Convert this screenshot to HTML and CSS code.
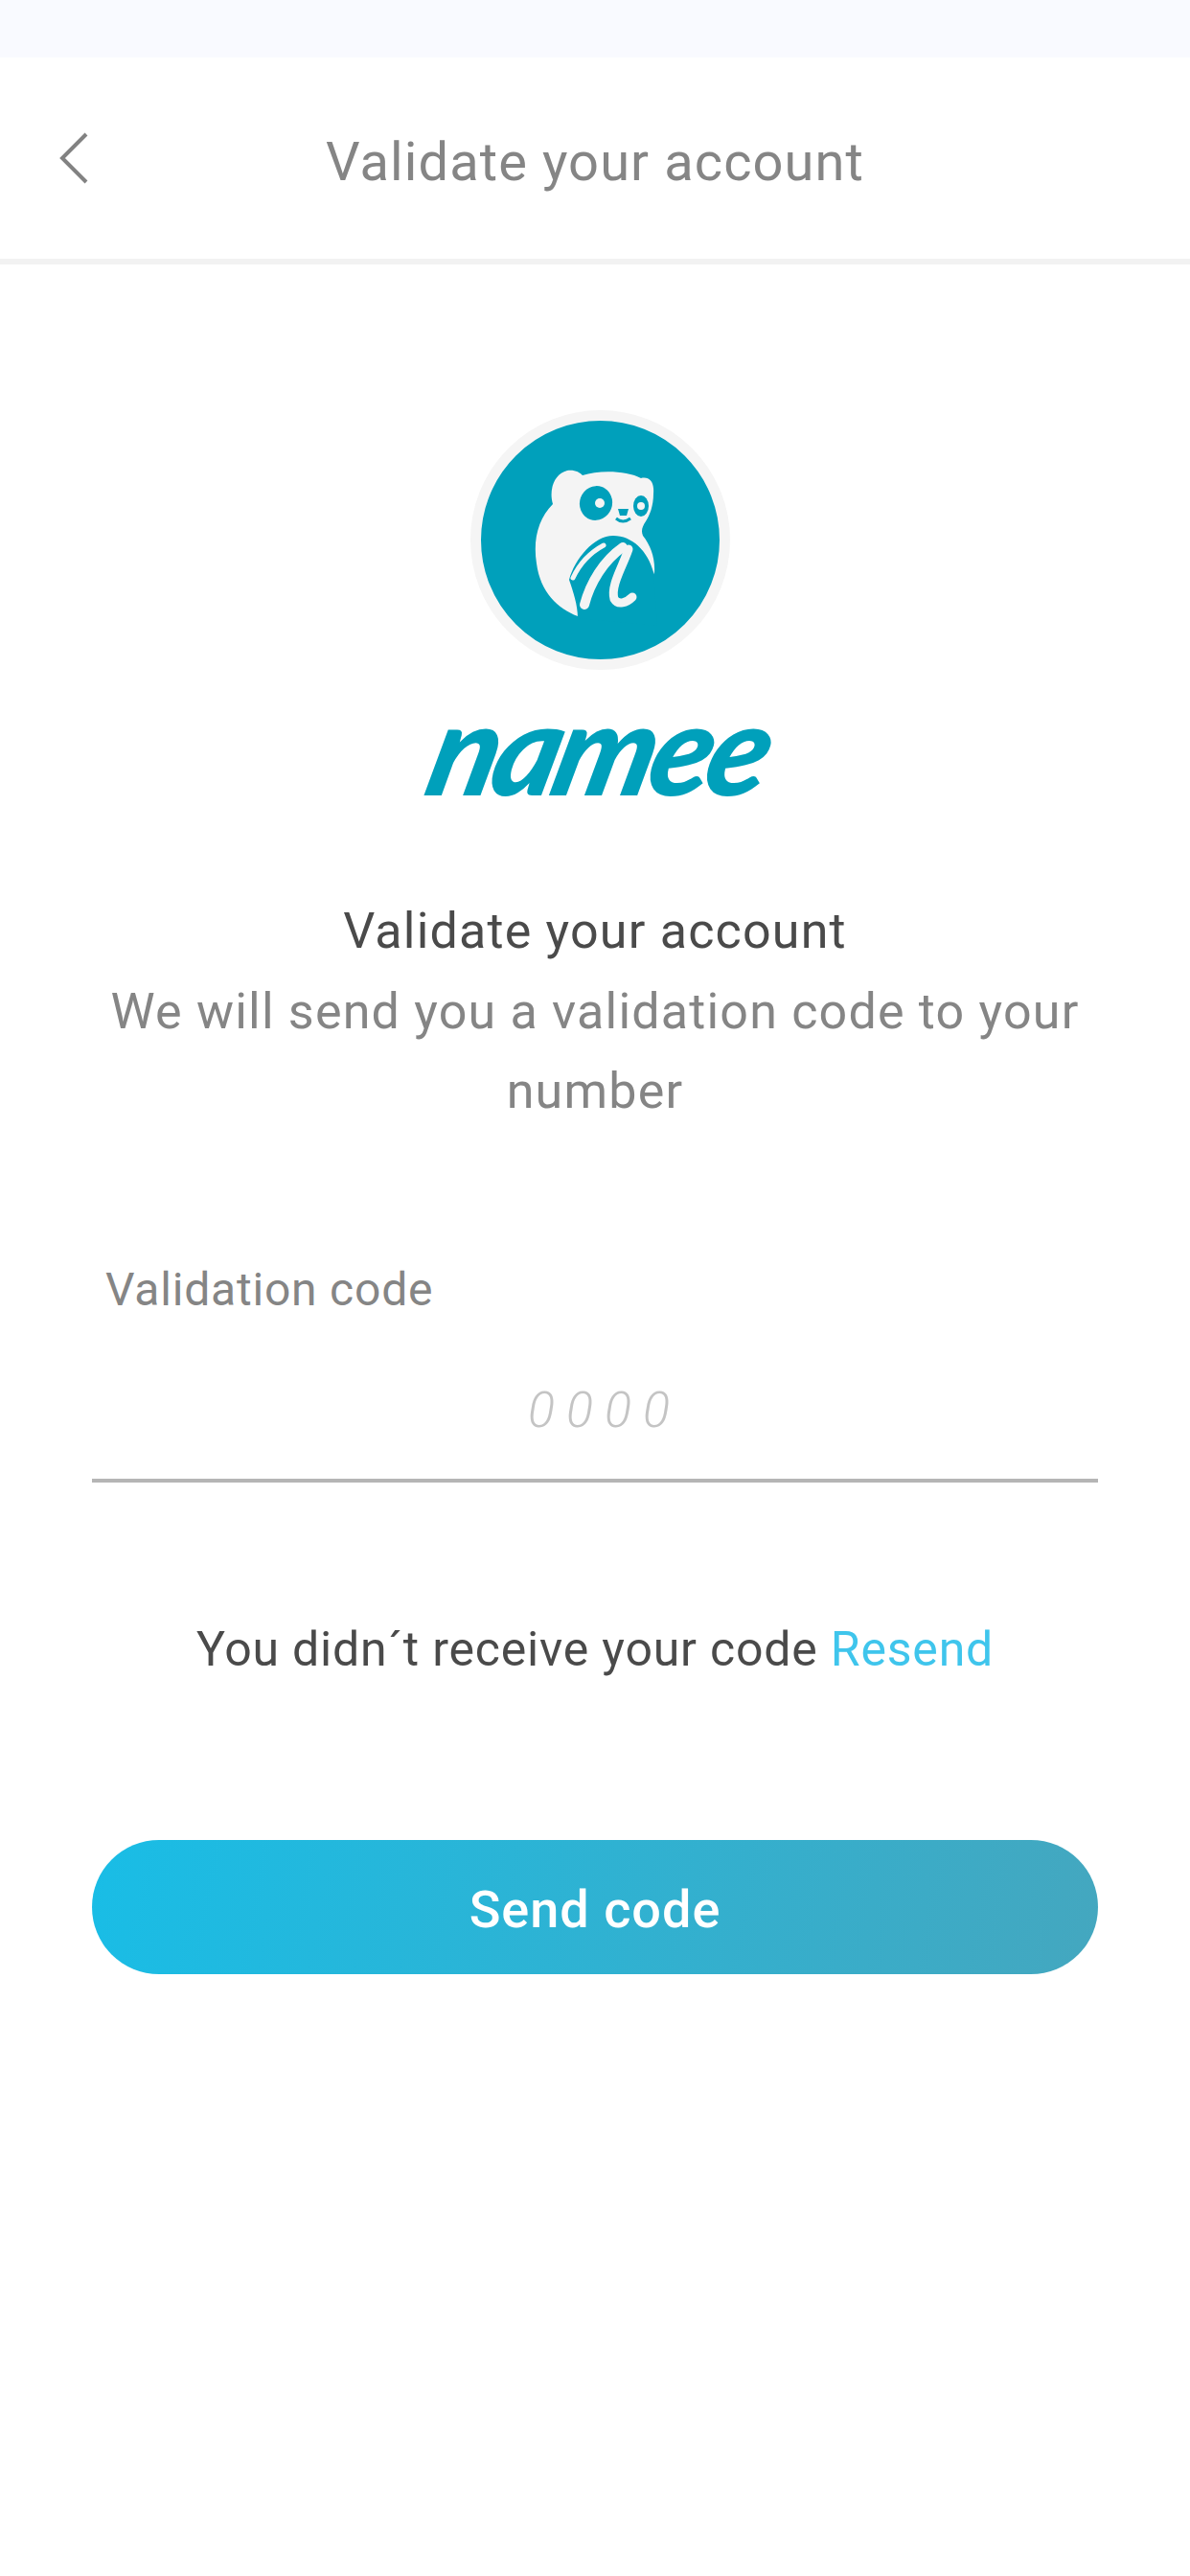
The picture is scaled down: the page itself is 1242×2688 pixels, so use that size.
FILE: index.html
```html
<!DOCTYPE html>
<html lang="en">
<head>
  <meta charset="UTF-8">
  <title>Validate your account</title>
  <link rel="stylesheet" href="styles.css">
</head>
<body>

  <div class="status-bar"></div>

  <header class="top-bar">
    <svg class="back-icon" viewBox="0 0 30 54" aria-hidden="true">
      <path d="M28 2 L3 27 L28 52" fill="none" stroke="#828282" stroke-width="4"/>
    </svg>
    <h1 class="top-title">Validate your account</h1>
  </header>

  <main class="content">
    <div class="logo-ring">
      <svg class="logo-mark" viewBox="0 0 300 300" aria-hidden="true">
        <!-- head and body -->
        <path fill="#f4f4f4" d="M107 113 C103 100 107 82 122 78 C130 77 135 80 138 83 C155 77 185 78 199 86 C208 84 213 90 212 102 C212 115 208 125 204 131 C200 137 199 141 201 146 C209 156 214 170 213 184 L200 215 L133 230 C112 222 94 205 90 175 C86 150 92 128 107 113 Z"/>
        <!-- space under the arch -->
        <path fill="#00a0bb" d="M124 192 C130 170 150 146 170 146 C190 146 206 162 212 184 L216 240 L133 232 C133 218 128 204 124 192 Z"/>
        <!-- m -->
        <g fill="none" stroke="#f4f4f4" stroke-linecap="round">
          <path stroke-width="5" d="M128 190 C135 175 147 163 160 156"/>
          <path stroke-width="10" d="M140 218 C146 195 160 172 180 158"/>
          <path stroke-width="9" d="M186 160 C180 178 167 198 171 212 C175 219 184 216 190 210"/>
        </g>
        <!-- face -->
        <ellipse fill="#00a0bb" cx="152" cy="112" rx="17" ry="18" transform="rotate(20 152 112)"/>
        <circle fill="#f4f4f4" cx="156" cy="112" r="5"/>
        <ellipse fill="#00a0bb" cx="199" cy="115" rx="8" ry="11"/>
        <circle fill="#f4f4f4" cx="199" cy="115" r="4"/>
        <path fill="#00a0bb" d="M175 118 L186 118 L184 125 L177 125 Z"/>
        <path fill="none" stroke="#00a0bb" stroke-width="3" d="M173 128 Q180 134 188 128"/>
      </svg>
    </div>
    <div class="wordmark">namee</div>

    <h2 class="heading">Validate your account</h2>
    <p class="intro">We will send you a validation code to your number</p>

    <form class="code-form">
      <label class="field-label" for="codeInput">Validation code</label>
      <input class="code-input" id="codeInput" type="text" placeholder="0000">
    </form>

    <p class="resend">You didn´t receive your code <a class="resend-link" href="#">Resend</a></p>

    <button class="send-btn" type="button">Send code</button>
  </main>

</body>
</html>
```

FILE: styles.css
```css
body {
  font-family: Roboto, "Liberation Sans", sans-serif;
  background: #fff;
  margin: 0;
}

.status-bar {
  height: 60px;
  background: #f9faff;
}

.top-bar {
  display: flex;
  align-items: center;
  justify-content: center;
  position: relative;
  height: 210px;
  border-bottom: 6px solid #f2f2f2;
}

.back-icon {
  position: absolute;
  left: 62px;
  top: 78px;
  width: 30px;
  height: 54px;
}

.top-title {
  margin: 8px 0 0;
  font-size: 56px;
  font-weight: 400;
  letter-spacing: 1.1px;
  color: #858585;
}

.content {
  display: flex;
  flex-direction: column;
  align-items: center;
  padding: 0 96px;
}

.logo-ring {
  width: 249px;
  height: 249px;
  margin: 152px 0 0 10px;
  border: 11px solid #f5f5f5;
  border-radius: 50%;
  background: #00a0bb;
}

.logo-mark {
  display: block;
  width: 300px;
  height: 300px;
  margin: -26px 0 0 -32px;
}

.wordmark {
  margin: 24px 0 0 12px;
  font-family: Lato, sans-serif;
  font-size: 133px;
  font-weight: 900;
  font-style: italic;
  line-height: 112px;
  letter-spacing: -6px;
  color: #00a0bb;
  transform: skewX(-14deg);
}

.heading {
  margin: 95px 0 0;
  font-size: 52px;
  font-weight: 400;
  line-height: 84px;
  letter-spacing: 1.2px;
  color: #4a4a4a;
}

.intro {
  margin: 0;
  font-size: 52px;
  font-weight: 400;
  line-height: 83px;
  letter-spacing: 1.2px;
  text-align: center;
  color: #858585;
}

.code-form {
  display: flex;
  flex-direction: column;
  align-self: stretch;
  margin-top: 137px;
}

.field-label {
  padding-left: 14px;
  font-size: 48px;
  font-weight: 400;
  letter-spacing: 0.8px;
  color: #858585;
}

.code-input {
  height: 143px;
  margin-top: 8px;
  padding: 18px 0 0 20px;
  border: 0;
  border-bottom: 4px solid #b5b5b5;
  outline: none;
  font-family: inherit;
  font-size: 52px;
  font-weight: 300;
  font-style: italic;
  letter-spacing: 12px;
  text-align: center;
}

.code-input::placeholder {
  color: #c4c4c4;
}

.resend {
  margin: 145px 0 0;
  font-size: 50px;
  font-weight: 400;
  letter-spacing: 0.8px;
  color: #4a4a4a;
}

.resend-link {
  color: #3fc5ec;
  text-decoration: none;
}

.send-btn {
  align-self: stretch;
  height: 140px;
  margin-top: 170px;
  padding-top: 6px;
  border: 0;
  border-radius: 70px;
  background: linear-gradient(100deg, #19bde6, #44a7bf);
  color: #fff;
  font-family: inherit;
  font-size: 54px;
  font-weight: 500;
  letter-spacing: 1px;
  cursor: pointer;
}
```
